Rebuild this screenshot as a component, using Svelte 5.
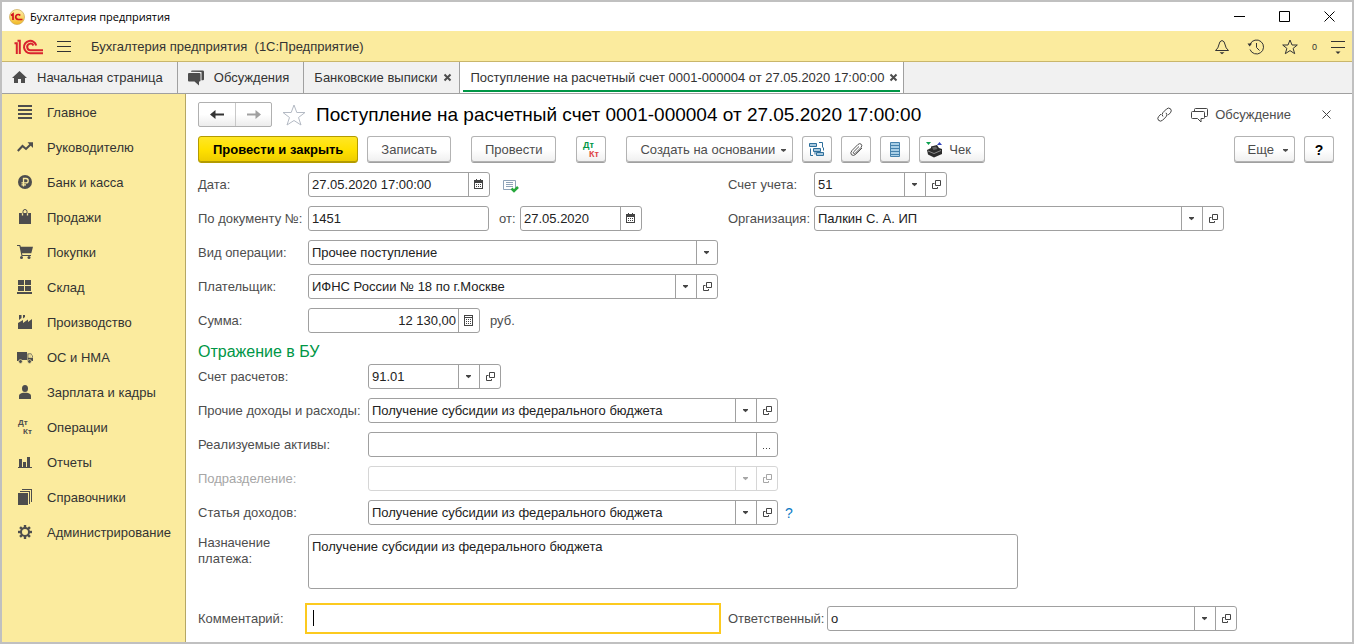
<script lang="ts">
  interface NavItem {
    id: string;
    title: string;
  }

  interface FieldOpts {
    id: string;
    label: string;
    value?: string;
    size?: string;
    labelClass?: string;
    buttons?: string[];
    disabled?: boolean;
    right?: boolean;
  }

  const nav: NavItem[] = [
    { id: 'main', title: 'Главное' },
    { id: 'trend', title: 'Руководителю' },
    { id: 'bank', title: 'Банк и касса' },
    { id: 'bag', title: 'Продажи' },
    { id: 'cart', title: 'Покупки' },
    { id: 'store', title: 'Склад' },
    { id: 'factory', title: 'Производство' },
    { id: 'truck', title: 'ОС и НМА' },
    { id: 'person', title: 'Зарплата и кадры' },
    { id: 'dtkt', title: 'Операции' },
    { id: 'chart', title: 'Отчеты' },
    { id: 'books', title: 'Справочники' },
    { id: 'gear', title: 'Администрирование' },
  ];

  const docTitle = 'Поступление на расчетный счет 0001-000004 от 27.05.2020 17:00:00';
  const subsidy = 'Получение субсидии из федерального бюджета';
  const teeth = [0, 45, 90, 135, 180, 225, 270, 315];

  const buttonNames: Record<string, string> = {
    drop: 'Выбрать из списка',
    open: 'Открыть',
    cal: 'Календарь',
    calc: 'Калькулятор',
    dots: 'Выбрать',
  };
</script>

{#snippet navIcon(id: string)}
  <svg class="nav-icon" viewBox="0 0 17 17" width="17" height="17" aria-hidden="true">
    {#if id === 'main'}
      <path d="M1 1h14v2H1zM1 5h14v2H1zM1 9h14v2H1zM1 13h14v2H1z" />
    {:else if id === 'trend'}
      <path class="line2" d="M.8 12 5.5 7 9 10l4.5-4.500" />
      <path d="M10.500 3.200H16V9z" />
    {:else if id === 'bank'}
      <circle cx="8" cy="8" r="7" />
      <path class="cut" d="M6.500 12.500V4.500H9a2.200 2.200 0 0 1 0 4.400H4.500M4.500 10.800H9" />
    {:else if id === 'bag'}
      <path d="M2 4h12v11H2z" />
      <path class="cut" d="M5.500 6.500V4M10.500 6.500V4" />
      <path class="line" d="M6 4.500V2.500a2 2 0 0 1 4 0v2" />
    {:else if id === 'cart'}
      <path d="M0 1h3.200l.6 1.800H16l-1.700 6.400H5L5.400 11H14v1H4.500L2.400 2H0z" />
      <circle cx="4.500" cy="13.600" r="1.500" />
      <circle cx="12" cy="13.600" r="1.500" />
    {:else if id === 'store'}
      <path d="M1 1h6v5H1zM8 1h6v5H8zM1 7h6v5H1zM8 7h6v5H8zM0 13h15v2H0z" />
    {:else if id === 'factory'}
      <path d="M1 15V9l5-3v3l5-3.500V8l4-3v10zM2 1h2.500v3L2 6zM6 1h2v2L6 4.500z" />
    {:else if id === 'truck'}
      <path d="M0 3h10v8H0zM10.500 4.500h3.700L16 7.500V12h-5.500zM0 11h4v1H0z" />
      <path class="cut" d="M12 6h1.800l1 2H12z" />
      <circle cx="3.500" cy="12.500" r="1.900" class="ring" />
      <circle cx="12.500" cy="12.500" r="1.900" class="ring" />
    {:else if id === 'person'}
      <ellipse cx="8" cy="4.500" rx="3" ry="3.600" />
      <path d="M2 15v-3q0-2.500 4-3.200h4q4 .7 4 3.200v3z" />
    {:else if id === 'dtkt'}
      <text x="1" y="6">Дт</text>
      <text x="6" y="15">Кт</text>
    {:else if id === 'chart'}
      <path d="M2 5h3v8H2zM6 8h3v5H6zM10 3h3v10h-3zM1 13h14v1H1z" />
    {:else if id === 'books'}
      <path d="M1 4h10v12H1zM3 2h10v13h-1V3H3zM5 0h10v13h-1V1H5z" />
    {:else if id === 'gear'}
      <circle class="line2" cx="8" cy="8" r="4" />
      {#each teeth as a}
        <path d="M6.800 1h2.400v3H6.800z" transform="rotate({a} 8 8)" />
      {/each}
    {/if}
  </svg>
{/snippet}

{#snippet cellIcon(kind: string)}
  <svg viewBox="0 0 14 13" width="14" height="13" aria-hidden="true">
    {#if kind === 'drop'}
      <path d="M4 5h5v1L6.500 8.300 4 6z" />
    {:else if kind === 'open'}
      <path class="thin" d="M6.500 2.500h5v5h-5zM5.500 5.500h-2v5h5V9" />
    {:else if kind === 'cal'}
      <path d="M2 2h2V1h1v1h3V1h1v1h2v9H2zM3 5v5h7V5z" fill-rule="evenodd" />
      <path d="M4 6h1v1H4zM6 6h1v1H6zM8 6h1v1H8zM4 8h1v1H4zM6 8h1v1H6zM8 8h1v1H8z" />
    {:else if kind === 'calc'}
      <path d="M2 1h9v11H2zM3 4v7h7V4zM3 2v1h7V2z" fill-rule="evenodd" />
      <path d="M4 5h1v1H4zM6 5h1v1H6zM8 5h1v1H8zM4 7h1v1H4zM6 7h1v1H6zM8 7h1v1H8zM4 9h1v1H4zM6 9h1v1H6zM8 9h1v1H8z" />
    {:else if kind === 'dots'}
      <path d="M3 10h1v1H3zM6 10h1v1H6zM9 10h1v1H9z" />
    {/if}
  </svg>
{/snippet}

{#snippet field(o: FieldOpts)}
  <label class="lbl {o.labelClass ?? ''}" class:off={o.disabled} for={o.id}>{o.label}</label>
  <div class="field {o.size ?? 'full'}" class:off={o.disabled}>
    <input id={o.id} type="text" value={o.value ?? ''} class:num={o.right} disabled={o.disabled} />
    {#each o.buttons ?? [] as b}
      <button type="button" class="cell" aria-label={buttonNames[b]} disabled={o.disabled}>
        {@render cellIcon(b)}
      </button>
    {/each}
  </div>
{/snippet}

{#snippet closeIcon()}
  <svg viewBox="0 0 9 9" width="9" height="9" aria-hidden="true"><path class="cross" d="M1.500 1.500l6 6M7.500 1.500l-6 6" /></svg>
{/snippet}

<div class="window">
  <header class="titlebar">
    <svg class="app-icon" viewBox="0 0 16 16" width="16" height="16" aria-hidden="true">
      <defs>
        <linearGradient id="ball" x1="0" y1="0" x2="0" y2="1">
          <stop offset="0" stop-color="#fff3b0" />
          <stop offset="1" stop-color="#f2b822" />
        </linearGradient>
      </defs>
      <circle cx="8" cy="8" r="7.500" fill="url(#ball)" stroke="#cfae62" stroke-width=".8" />
      <path d="M2 6.500 4 5v6M13.500 10.500H9.200A2.500 2.500 0 1 1 11.200 6.500" fill="none" stroke="#d3121c" stroke-width="1.700" />
    </svg>
    <span class="win-name">Бухгалтерия предприятия</span>
    <button type="button" class="win-btn" aria-label="Свернуть">
      <svg viewBox="0 0 11 11" width="11" height="11"><path d="M0 5.500h11" /></svg>
    </button>
    <button type="button" class="win-btn" aria-label="Развернуть">
      <svg viewBox="0 0 11 11" width="11" height="11"><path d="M.5.5h10v10H.5z" /></svg>
    </button>
    <button type="button" class="win-btn" aria-label="Закрыть">
      <svg viewBox="0 0 11 11" width="11" height="11"><path d="M.5.5l10 10M10.500.5l-10 10" /></svg>
    </button>
  </header>

  <div class="appbar">
    <svg class="logo" viewBox="0 0 30 16" width="30" height="16" aria-hidden="true">
      <path d="M.5 4.200h2.300V15M3.500 1.700h2.300V15M29 14.200H16.500A6.200 6.200 0 1 1 22.200 6.500M29 11.200H17A3.300 3.300 0 1 1 19.500 6.500" />
    </svg>
    <button type="button" class="bar-btn" aria-label="Меню">
      <svg viewBox="0 0 14 12" width="14" height="12"><path d="M0 .5h14M0 5.500h14M0 10.500h14" /></svg>
    </button>
    <span class="app-name">Бухгалтерия предприятия&nbsp; (1С:Предприятие)</span>
    <button type="button" class="bar-btn" aria-label="Уведомления">
      <svg viewBox="0 0 16 16" width="16" height="16"><path d="M1.500 11.500h13q-3-2.500-3.300-5.500Q10.500 1.800 8 1.500 5.500 1.800 4.800 6 4.500 9 1.500 11.500z" /><path class="solid" d="M5.500 13.200h5L8 15.300z" /></svg>
    </button>
    <button type="button" class="bar-btn" aria-label="История">
      <svg viewBox="0 0 18 16" width="18" height="16"><path d="M3.200 5A7 7 0 1 1 3 10.500M9.500 4v4.500l3 3" /><path class="solid" d="M.5 4.500H5L2.700 7.500z" /></svg>
    </button>
    <button type="button" class="bar-btn" aria-label="Избранное">
      <svg viewBox="0 0 16 16" width="16" height="16"><path d="M8 1l2 5h5.300l-4.200 3.400 1.600 5.300L8 11.600l-4.700 3.100 1.600-5.300L.7 6H6z" /></svg>
    </button>
    <span class="count">0</span>
    <button type="button" class="bar-btn" aria-label="Настройки">
      <svg viewBox="0 0 14 16" width="14" height="16"><path d="M0 2.500h14M0 8.500h14" /><path class="solid" d="M4.500 12.500h5L7 15z" /></svg>
    </button>
  </div>

  <nav class="tabs" aria-label="Открытые окна">
    <a class="tab" href="#home">
      <svg viewBox="0 0 15 13" width="15" height="13" aria-hidden="true"><path d="M7.500 0 15 7h-2v5H9V8H6v4H2V7H0z" /></svg>
      Начальная страница
    </a>
    <a class="tab" href="#talks">
      <svg viewBox="0 0 16 16" width="16" height="16" aria-hidden="true"><path d="M0 4q0-1 1-1h10.500q1 0 1 1v6.500q0 1-1 1H11v4L6.500 11.500H1q-1 0-1-1z" /><path d="M3 1.800q0-1.300 1.300-1.300h10.400Q16 .5 16 1.800v7.400q0 1-1 1h-1.500V2z" /></svg>
      Обсуждения
    </a>
    <div class="tab closable">
      <a href="#bank">Банковские выписки</a>
      <button type="button" aria-label="Закрыть вкладку">{@render closeIcon()}</button>
    </div>
    <div class="tab closable active">
      <a href="#doc" aria-current="page">{docTitle}</a>
      <button type="button" aria-label="Закрыть вкладку">{@render closeIcon()}</button>
    </div>
  </nav>

  <div class="body">
    <aside class="sidebar">
      {#each nav as item (item.id)}
        <a class="nav-item" href="#{item.id}">
          {@render navIcon(item.id)}
          {item.title}
        </a>
      {/each}
    </aside>

    <main>
      <div class="headline">
        <div class="history">
          <button type="button" aria-label="Назад">
            <svg viewBox="0 0 15 11" width="15" height="11"><path d="M4 5.500h10" /><path class="solid" d="M0 5.500 5.500 1v9z" /></svg>
          </button>
          <button type="button" class="dim" aria-label="Вперед">
            <svg viewBox="0 0 15 11" width="15" height="11"><path d="M1 5.500h10" /><path class="solid" d="M15 5.500 9.500 1v9z" /></svg>
          </button>
        </div>
        <button type="button" class="fav" aria-label="В избранное">
          <svg viewBox="0 0 24 22" width="24" height="22"><path d="M12 1l2.800 7.500H23l-6.500 5 2.500 7.500-7-4.500-7 4.500 2.500-7.500-6.500-5h8.200z" /></svg>
        </button>
        <h1>{docTitle}</h1>
        <button type="button" class="plain" aria-label="Получить ссылку">
          <svg viewBox="0 0 17 17" width="17" height="17"><path d="M7 10.500q-2-2 0-4l3.500-3.500q2-1.800 4-.2 1.700 2-.1 4L12 9.200M10 6.800q2 2 0 4L6.500 14.300q-2 1.700-4 0-1.600-2 .2-3.900L5 8.100" /></svg>
        </button>
        <button type="button" class="plain talk">
          <svg viewBox="0 0 17 16" width="17" height="16"><path d="M1.500 4.500h11q1 0 1 1v5q0 1-1 1H10v3.500L6.500 11.500h-5q-1 0-1-1v-5q0-1 1-1zM3.500 4V2.500q0-1 1-1h11q1 0 1 1v6q0 1-1 1H14" /></svg>
          Обсуждение
        </button>
        <button type="button" class="plain" aria-label="Закрыть">
          <svg viewBox="0 0 9 9" width="9" height="9"><path d="M.5.5l8 8M8.500.5l-8 8" /></svg>
        </button>
      </div>

      <div class="toolbar">
        <button type="button" class="btn primary">Провести и закрыть</button>
        <button type="button" class="btn spaced">Записать</button>
        <button type="button" class="btn spaced">Провести</button>
        <button type="button" class="btn icon spaced" aria-label="Дт Кт">
          <svg viewBox="0 0 18 19" width="18" height="19"><text class="dt" x="1" y="8">Дт</text><text class="kt" x="7" y="17">Кт</text></svg>
        </button>
        <button type="button" class="btn menu">
          Создать на основании
          <svg viewBox="0 0 5 4" width="5" height="4"><path d="M0 1h5v1L2.500 4 0 2z" /></svg>
        </button>
        <button type="button" class="btn icon" aria-label="Структура подчиненности">
          <svg viewBox="0 0 16 15" width="16" height="15">
            <g fill="#a9c9de" stroke="#2d6f9c"><path d="M.5 1.500h7v3h-7zM4.500 6.500h7v3h-7zM7.500 10.500h7v3h-7z" /></g>
            <path d="M10 .5h3.500v5M14.500 8.500v-3M4 13.500H1.500v-7M6 12.500V10" fill="none" stroke="#2d6f9c" />
          </svg>
        </button>
        <button type="button" class="btn icon" aria-label="Присоединенные файлы">
          <svg viewBox="0 0 15 15" width="15" height="15"><path class="clip" d="M10 4.500 4.700 9.800q-.8 1.100 0 1.700.8.600 1.700-.3L12 5.500q1.600-1.900.2-3.300-1.500-1.300-3.300.3L3 8.500q-2.200 2.500-.5 4.300 1.900 1.600 4.400-.6L13 6" /></svg>
        </button>
        <button type="button" class="btn icon" aria-label="Реестр">
          <svg viewBox="0 0 12 15" width="12" height="15"><path d="M1.500.5h9v14h-9z" fill="#a9cfe6" stroke="#4682ad" /><path d="M2 3.500h8M2 6.500h8M2 9.500h8M2 12.500h8" stroke="#4682ad" /></svg>
        </button>
        <button type="button" class="btn check">
          <svg viewBox="0 0 17 16" width="17" height="16">
            <path d="M0 0h5L2.500 3z" fill="#0aa04e" /><path d="M11 3h5l-2.500-3z" fill="#3344bb" />
            <path d="M1 8l4-2V4.500l6-1.500 2 3 3 1v5l-8 3.500-6-3z" fill="#2b2b2b" />
            <path d="M6 5.500l4-1 1.500 2.500-4 1z" fill="#666" /><path d="M2 9l6 2.500 7-3" stroke="#888" fill="none" />
          </svg>
          Чек
        </button>
        <button type="button" class="btn menu more">
          Еще
          <svg viewBox="0 0 5 4" width="5" height="4"><path d="M0 1h5v1L2.500 4 0 2z" /></svg>
        </button>
        <button type="button" class="btn icon help">?</button>
      </div>

      <form>
        <div class="row">
          <div class="left">
            {@render field({ id: 'date', label: 'Дата:', value: '27.05.2020 17:00:00', size: 'date', buttons: ['cal'] })}
            <svg class="posted" viewBox="0 0 16 16" width="16" height="16" role="img" aria-label="Проведен">
              <path d="M.5 3.500h12v9H.5z" fill="#fff" stroke="#8fa3b8" />
              <path d="M3 5.500h7M3 7.500h7M3 9.500h7" stroke="#8fa3b8" />
              <path d="M8.500 11.500l2.500 2.500L15 10" fill="none" stroke="#27a83c" stroke-width="2.500" />
            </svg>
          </div>
          {@render field({ id: 'account', label: 'Счет учета:', value: '51', size: 'account', labelClass: 'second', buttons: ['drop', 'open'] })}
        </div>
        <div class="row">
          <div class="left">
            {@render field({ id: 'doc-no', label: 'По документу №:', value: '1451', size: 'number' })}
            {@render field({ id: 'doc-date', label: 'от:', value: '27.05.2020', size: 'short', labelClass: 'from', buttons: ['cal'] })}
          </div>
          {@render field({ id: 'org', label: 'Организация:', value: 'Палкин С. А. ИП', labelClass: 'second', buttons: ['drop', 'open'] })}
        </div>
        <div class="row">
          <label class="lbl" for="kind">Вид операции:</label>
          <div class="field full">
            <select id="kind"><option>Прочее поступление</option></select>
            <span class="cell">{@render cellIcon('drop')}</span>
          </div>
        </div>
        <div class="row">
          {@render field({ id: 'payer', label: 'Плательщик:', value: 'ИФНС России № 18 по г.Москве', buttons: ['drop', 'open'] })}
        </div>
        <div class="row">
          {@render field({ id: 'sum', label: 'Сумма:', value: '12 130,00', size: 'sum', right: true, buttons: ['calc'] })}
          <span class="unit">руб.</span>
        </div>

        <h2>Отражение в БУ</h2>

        <div class="row">
          {@render field({ id: 'settle', label: 'Счет расчетов:', value: '91.01', size: 'account', labelClass: 'wide', buttons: ['drop', 'open'] })}
        </div>
        <div class="row">
          {@render field({ id: 'other', label: 'Прочие доходы и расходы:', value: subsidy, labelClass: 'wide', buttons: ['drop', 'open'] })}
        </div>
        <div class="row">
          {@render field({ id: 'assets', label: 'Реализуемые активы:', labelClass: 'wide', buttons: ['dots'] })}
        </div>
        <div class="row">
          {@render field({ id: 'dept', label: 'Подразделение:', labelClass: 'wide', buttons: ['drop', 'open'], disabled: true })}
        </div>
        <div class="row">
          {@render field({ id: 'income', label: 'Статья доходов:', value: subsidy, labelClass: 'wide', buttons: ['drop', 'open'] })}
          <a class="hint" href="#help">?</a>
        </div>
        <div class="row top">
          <label class="lbl" for="purpose">Назначение платежа:</label>
          <textarea id="purpose" value={subsidy}></textarea>
        </div>
        <div class="row last">
          <div class="left">
            <label class="lbl" for="comment">Комментарий:</label>
            <div class="field full focused">
              <input id="comment" type="text" />
              <span class="caret"></span>
            </div>
          </div>
          {@render field({ id: 'resp', label: 'Ответственный:', value: 'о', labelClass: 'third', buttons: ['drop', 'open'] })}
        </div>
      </form>
    </main>
  </div>
</div>

<style>
  :global(body) {
    background: #fff;
  }
  .window {
    box-sizing: border-box;
    min-height: 100vh;
    display: flex;
    flex-direction: column;
    border: 2px solid #c0c0c0;
    font: 13px/16px 'Liberation Sans', Arial, sans-serif;
    color: #333;
  }
  .window :global(*) { box-sizing: border-box; }
  button, input, select, textarea {
    font: inherit;
    color: inherit;
    margin: 0;
    padding: 0;
    border: 0;
    background: none;
  }
  button { display: flex; align-items: center; justify-content: center; flex: none; }
  input, select, textarea { outline: none; }
  a { color: inherit; text-decoration: none; }
  svg { flex: none; display: block; }

  /* window frame */
  .titlebar {
    display: flex;
    align-items: center;
    height: 29px;
    padding-left: 7px;
    background: #fff;
    color: #000;
    font: 11px/16px 'Open Sans', 'Noto Sans', sans-serif;
  }
  .win-name { flex: 1; margin-left: 5px; }
  .win-btn { width: 45px; height: 29px; }
  .win-btn path { fill: none; stroke: #000; }

  .appbar {
    display: flex;
    align-items: center;
    height: 31px;
    padding: 2px 7px 0 12px;
    background: #fbeb9e;
    border-bottom: 1px solid #c9b66b;
  }
  .logo path { fill: none; stroke: #d9232e; stroke-width: 2; }
  .appbar .logo { margin-right: 13px; }
  .app-name { flex: 1; margin-left: 20px; }
  .bar-btn path { fill: none; stroke: #333; }
  .bar-btn .solid { fill: #333; stroke: none; }
  .bar-btn + .bar-btn { margin-left: 17px; }
  .count { width: 33px; text-align: center; font-size: 9px; }

  .tabs {
    display: flex;
    height: 32px;
    background: #f1f1f1;
    border-bottom: 1px solid #a0a0a0;
  }
  .tab {
    display: flex;
    align-items: center;
    gap: 10px;
    padding: 0 14px 0 10px;
    border-right: 1px solid #a0a0a0;
    white-space: nowrap;
  }
  .tab svg { fill: #4d4d4d; }
  .closable { gap: 6px; padding-right: 7px; }
  .cross { stroke: #4d4d4d; stroke-width: 2; }
  .active {
    gap: 4px;
    padding-right: 5px;
    background: linear-gradient(#009646, #009646) center bottom 1px / calc(100% - 6px) 2px no-repeat #fff;
  }

  .body { display: flex; flex: 1; }
  .sidebar {
    width: 184px;
    flex: none;
    padding-top: 1px;
    background: #fbeb9e;
    border-right: 1px solid #b5a765;
  }
  .nav-item { display: flex; align-items: center; gap: 13px; height: 35px; padding-left: 15px; white-space: nowrap; }
  .nav-icon { fill: #4d4d4d; }
  .nav-icon .line { fill: none; stroke: #4d4d4d; }
  .nav-icon .line2 { fill: none; stroke: #4d4d4d; stroke-width: 2; }
  .nav-icon .cut { fill: none; stroke: #fbeb9e; stroke-width: 1.3; }
  .nav-icon .ring { stroke: #fbeb9e; stroke-width: .7; }
  .nav-icon text { font-size: 8px; font-weight: bold; }

  main { flex: 1; min-width: 0; padding: 8px 18px 8px 12px; background: #fff; }
  .headline { display: flex; align-items: center; height: 25px; margin-bottom: 9px; }
  .history { display: flex; border: 1px solid #b0b0b0; border-radius: 2px; background: linear-gradient(#fff 50%, #ececec); }
  .history button { width: 36px; height: 23px; }
  .history button + button { border-left: 1px solid #c8c8c8; }
  .history path { fill: none; stroke: #333; stroke-width: 2; }
  .history .dim path { stroke: #a0a0a0; }
  .history .solid { fill: #333; stroke-width: 0; }
  .history .dim .solid { fill: #a0a0a0; }
  .fav { margin: 0 10px 0 10px; }
  .fav path { fill: none; stroke: #b4bac4; }
  h1 { flex: 1; margin: 0; font-size: 19px; line-height: 25px; font-weight: normal; color: #000; white-space: nowrap; }
  .plain path { fill: none; stroke: #444; }
  .plain { color: #4d4d4d; }
  .talk { gap: 7px; margin: 0 31px 0 18px; }
  .plain:last-child { margin-right: 3px; }

  .toolbar { display: flex; gap: 9px; margin-bottom: 9px; }
  .btn {
    height: 27px;
    padding: 0 13px;
    border: 1px solid #b3b3b3;
    border-bottom-color: #a0a0a0;
    border-radius: 3px;
    background: linear-gradient(#fff 50%, #efefef);
    box-shadow: inset 0 -1px #b3b3b3;
    color: #4d4d4d;
    white-space: nowrap;
  }
  .spaced { margin-right: 11px; }
  .primary {
    padding: 0 14px;
    border-color: #b39b00;
    background: linear-gradient(#ffe726, #ffe100 50%, #edcb00);
    box-shadow: inset 0 -1px #b39b00;
    color: #000;
    font-weight: bold;
  }
  .icon { width: 30px; padding: 0; }
  .menu { gap: 6px; padding-right: 6px; }
  .menu path { fill: #4d4d4d; }
  .check { gap: 6px; padding-left: 6px; }
  .more { gap: 9px; margin-left: auto; }
  .help { color: #000; font-size: 14px; font-weight: bold; }
  .btn text { font-size: 9px; font-weight: bold; }
  .dt { fill: #009646; }
  .kt { fill: #e04545; }
  .clip { fill: none; stroke: #555; }

  form { display: flex; flex-direction: column; gap: 9px; color: #4d4d4d; }
  .row, .left { display: flex; align-items: center; }
  .left { width: 530px; }
  .lbl { flex: none; width: 110px; }
  .wide { width: 170px; white-space: nowrap; }
  .second { width: 86px; }
  .third { width: 99px; }
  .from { width: 31px; padding-left: 10px; }
  .lbl.off { color: #a6a6a6; }
  .field {
    position: relative;
    display: flex;
    height: 25px;
    border: 1px solid #a0a0a0;
    border-radius: 3px;
    background: #fff;
    color: #222;
  }
  .full { width: 410px; }
  .date { width: 182px; }
  .number { width: 181px; }
  .short { width: 122px; }
  .account { width: 133px; }
  .sum { width: 172px; }
  .field input, .field select { flex: 1; min-width: 0; padding: 0 3px; appearance: none; }
  .field .num { text-align: right; padding-right: 2px; }
  .cell { display: flex; align-items: center; justify-content: center; width: 21px; border-left: 1px solid #a0a0a0; }
  .cell path { fill: #444; }
  .cell .thin { fill: none; stroke: #444; }
  .field.off, .off .cell { border-color: #d6d6d6; }
  .off .cell path { fill: #a6a6a6; }
  .off .cell .thin { fill: none; stroke: #a6a6a6; }
  .posted { margin-left: 13px; }
  .unit { margin-left: 10px; }
  .hint { margin-left: 7px; color: #0d7ac4; font-size: 14px; }
  h2 { margin: 0 0 -6px; font-size: 16px; line-height: 19px; font-weight: normal; color: #009646; }
  .top { align-items: flex-start; }
  .top .lbl { padding: 1px 30px 0 0; }
  textarea {
    flex: 0 1 710px;
    height: 55px;
    padding: 4px 3px;
    border: 1px solid #a0a0a0;
    border-radius: 3px;
    color: #222;
    resize: none;
  }
  .last { margin-top: 8px; }
  .focused { border-color: transparent; border-radius: 0; outline: 2px solid #fcca1f; outline-offset: 1px; }
  .caret { position: absolute; left: 4px; top: 3px; width: 1px; height: 16px; background: #000; }
</style>
